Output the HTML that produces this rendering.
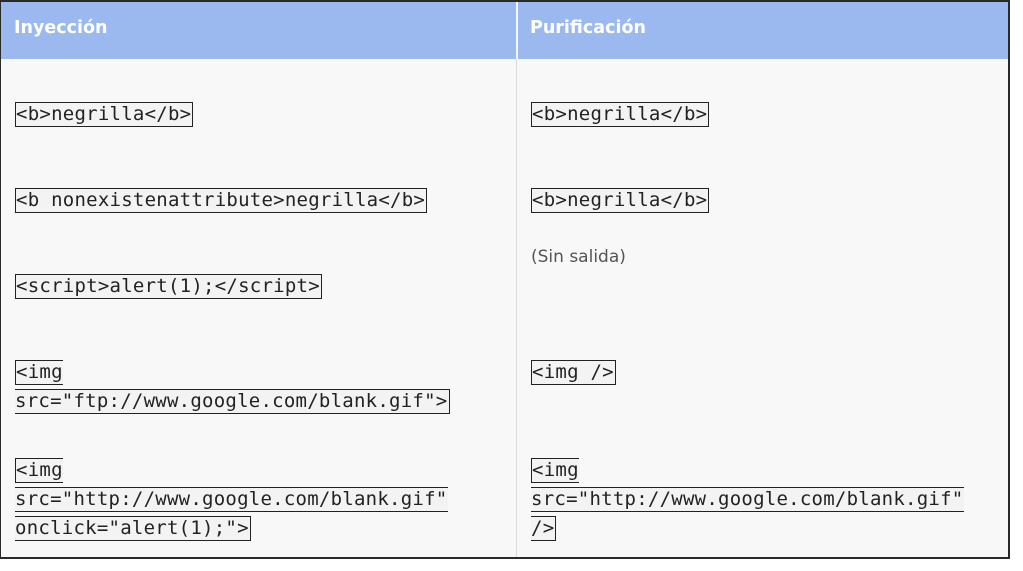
<!DOCTYPE html>
<html><head><meta charset="utf-8"><style>
html,body{margin:0;padding:0;background:#fff;width:1023px;height:571px;overflow:hidden}
.t{position:absolute;left:0;top:0;width:1007px;height:555px;border:1px solid #2a2a2a;border-width:2px 2px 2px 1px;background:#f8f8f8}
.h{position:absolute;left:0;top:0;width:1007px;height:57px;background:#9cb9ef}
.h span{position:absolute;top:16px;font:bold 17.5px "DejaVu Sans","Liberation Sans",sans-serif;color:#fff}
.v1{position:absolute;left:515px;top:0;width:2px;height:57px;background:#f4f6fb}
.v2{position:absolute;left:515px;top:57px;width:1px;height:498px;background:#dcdcdc}
.c{position:absolute;font:19px "DejaVu Sans Mono","Liberation Mono",monospace;letter-spacing:0.25px;color:#222;line-height:29px;white-space:nowrap}
.c span{border:1px solid #222;background:#f3f3f3;padding:0 1px 1px 0}
.s{position:absolute;left:530px;top:245px;font:17px "DejaVu Sans","Liberation Sans",sans-serif;color:#555}
</style></head><body>
<div class="t">
<div class="h"><span style="left:13px">Inyección</span><span style="left:529px">Purificación</span></div>
<div class="v1"></div><div class="v2"></div>
<div class="c" style="left:14px;top:98px"><span>&lt;b&gt;negrilla&lt;/b&gt;</span></div>
<div class="c" style="left:14px;top:184px"><span>&lt;b nonexistenattribute&gt;negrilla&lt;/b&gt;</span></div>
<div class="c" style="left:14px;top:270px"><span>&lt;script&gt;alert(1);&lt;/script&gt;</span></div>
<div class="c" style="left:14px;top:356px"><span>&lt;img<br>src="ftp://www.google.com/blank.gif"&gt;</span></div>
<div class="c" style="left:14px;top:454px"><span>&lt;img<br>src="http://www.google.com/blank.gif"<br>onclick="alert(1);"&gt;</span></div>
<div class="c" style="left:530px;top:98px"><span>&lt;b&gt;negrilla&lt;/b&gt;</span></div>
<div class="c" style="left:530px;top:184px"><span>&lt;b&gt;negrilla&lt;/b&gt;</span></div>
<div class="s">(Sin salida)</div>
<div class="c" style="left:530px;top:356px"><span>&lt;img /&gt;</span></div>
<div class="c" style="left:530px;top:454px"><span>&lt;img<br>src="http://www.google.com/blank.gif"<br>/&gt;</span></div>
</div>
</body></html>
